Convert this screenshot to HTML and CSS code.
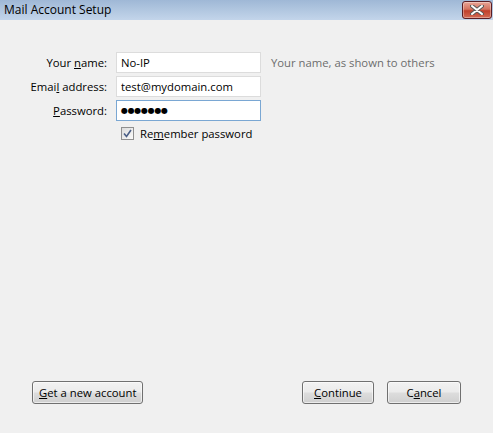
FILE: index.html
```html
<!DOCTYPE html>
<html lang="en">
<head>
  <meta charset="UTF-8">
  <title>Mail Account Setup</title>
  <link rel="stylesheet" href="styles.css">
</head>
<body>
  <div class="window">
    <div class="titlebar">
      <span class="title">Mail Account Setup</span>
      <button class="close">
        <svg width="14" height="10" viewBox="0 0 14 10">
          <path d="M2 1 L12 9 M12 1 L2 9" stroke="#5a5a5a" stroke-width="4" stroke-linecap="round"/>
          <path d="M2 1 L12 9 M12 1 L2 9" stroke="#fff" stroke-width="2" stroke-linecap="round"/>
        </svg>
      </button>
    </div>

    <div class="content">
      <div class="form">
        <label for="name">Your <u>n</u>ame:</label>
        <input type="text" id="name" value="No-IP">
        <span class="hint">Your name, as shown to others</span>

        <label for="email">Emai<u>l</u> address:</label>
        <input type="text" id="email" value="test@mydomain.com">
        <span></span>

        <label><u>P</u>assword:</label>
        <div class="field focused"><span class="dots">●●●●●●●</span></div>
        <span></span>

        <span></span>
        <div class="remember">
          <span class="check">
            <svg width="9" height="9" viewBox="0 0 9 9"><path d="M1 4.5 L3.5 7.5 L8 1" fill="none" stroke="#4a5e86" stroke-width="1.6"/></svg>
          </span>
          <span>Re<u>m</u>ember password</span>
        </div>
      </div>

      <div class="footer">
        <button class="btn"><u>G</u>et a new account</button>
        <div class="right">
          <button class="btn wide"><u>C</u>ontinue</button>
          <button class="btn wide">C<u>a</u>ncel</button>
        </div>
      </div>
    </div>
  </div>
</body>
</html>
```

FILE: styles.css
```css
body {
  margin: 0;
  font-family: "Open Sans", "Noto Sans", sans-serif;
  font-size: 11.3px;
  color: #000;
}
.window {
  width: 493px;
  height: 433px;
  background: #f0f0f0;
  display: flex;
  flex-direction: column;
  overflow: hidden;
}
.titlebar {
  height: 20px;
  background: linear-gradient(to bottom, #9fb8d6, #c3d5ea);
  display: flex;
  align-items: center;
  justify-content: space-between;
  padding: 0 1px 0 4px;
}
.title {
  font-size: 12px;
  color: #000;
  margin-top: -1px;
}
.close {
  width: 30px;
  height: 18px;
  margin-top: -1px;
  border: 1px solid #5a1e24;
  border-radius: 3px;
  background: linear-gradient(to bottom, #e8a597 0%, #d4735f 45%, #c0402c 55%, #d26a55 100%);
  padding: 0;
  display: flex;
  align-items: center;
  justify-content: center;
  box-shadow: inset 0 0 0 1px rgba(255,255,255,0.35);
}
.content {
  flex: 1;
  display: flex;
  flex-direction: column;
  padding: 32px 0 29px 0;
}
.form {
  display: grid;
  grid-template-columns: 107px 145px auto;
  column-gap: 9px;
  row-gap: 3px;
  align-items: center;
}
.form label {
  text-align: right;
}
.form input,
.field {
  box-sizing: border-box;
  height: 21px;
  width: 145px;
  border: 1px solid #dcdcdc;
  background: #fff;
  font-family: inherit;
  font-size: 11.3px;
  padding: 0 4px;
  margin: 0;
  outline: none;
}
.field {
  display: flex;
  align-items: center;
}
.field.focused {
  border-color: #7aa7d3;
}
.dots {
  font-family: "DejaVu Sans", sans-serif;
  font-size: 8px;
  letter-spacing: -0.3px;
}
.hint {
  color: #6d6d6d;
  margin-left: 1px;
}
.remember {
  grid-column: 2 / 4;
  display: flex;
  align-items: center;
  padding: 2px 0 0 5px;
  gap: 6px;
}
.check {
  width: 11px;
  height: 11px;
  border: 1px solid #8f8f8f;
  background: linear-gradient(to bottom right, #dcdcdc, #fafafa);
  display: flex;
  align-items: center;
  justify-content: center;
}
.footer {
  margin-top: auto;
  display: flex;
  justify-content: space-between;
  padding: 0 32px;
}
.right {
  display: flex;
  gap: 13px;
}
.btn {
  box-sizing: border-box;
  height: 23px;
  border: 1px solid #707070;
  border-radius: 3px;
  background: linear-gradient(to bottom, #f2f2f2 0%, #ebebeb 48%, #dddddd 52%, #cfcfcf 100%);
  font-family: inherit;
  font-size: 11.3px;
  color: #000;
  padding: 0 6px;
  box-shadow: inset 0 0 0 1px rgba(255,255,255,0.6);
}
.btn.wide {
  width: 72px;
}
.right .btn:last-child {
  width: 74px;
}
```
